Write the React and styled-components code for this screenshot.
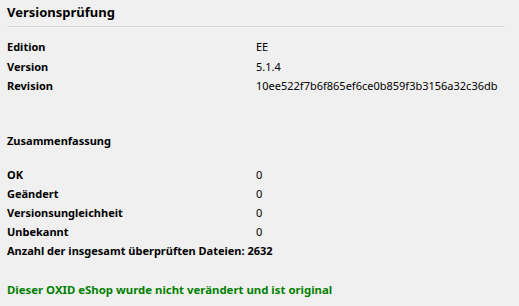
import React from "react";
import styled, { createGlobalStyle } from "styled-components";

const Global = createGlobalStyle`
  html, body { margin: 0; padding: 0; background: #f0f0f0; }
  body { font-family: "Noto Sans", "DejaVu Sans", sans-serif; color: #000; }
`;

const Page = styled.div`
  padding: 4px 14px 0 7px;
  display: flex;
  flex-direction: column;
`;

const Title = styled.h1`
  margin: 0;
  font-size: 13px;
  font-weight: bold;
  line-height: 17px;
  padding-bottom: 5px;
  border-bottom: 1px solid #d8d8d8;
`;

const Table = styled.div`
  display: grid;
  grid-template-columns: 249px 1fr;
  grid-auto-rows: ${(p) => p.$row}px;
  align-items: center;
  font-size: 11px;
  margin-top: ${(p) => p.$mt}px;
`;

const Label = styled.div`
  font-weight: bold;
  white-space: nowrap;
`;

const Value = styled.div`
  white-space: nowrap;
`;

const Section = styled.div`
  font-size: 11px;
  font-weight: bold;
  margin-top: 38.5px;
  line-height: 14px;
`;

const Summary = styled.div`
  font-size: 11px;
  font-weight: bold;
  white-space: nowrap;
  line-height: 19px;
`;

const Ok = styled.div`
  color: #008000;
  font-size: 11.4px;
  font-weight: bold;
  margin-top: 23.5px;
  line-height: 14px;
  white-space: nowrap;
`;

const info = [
  ["Edition", "EE"],
  ["Version", "5.1.4"],
  ["Revision", "10ee522f7b6f865ef6ce0b859f3b3156a32c36db"],
];

const summary = [
  ["OK", "0"],
  ["Geändert", "0"],
  ["Versionsungleichheit", "0"],
  ["Unbekannt", "0"],
];

export default function App() {
  return (
    <>
      <Global />
      <Page>
        <Title>Versionsprüfung</Title>
        <Table $mt={10} $row={19.5}>
          {info.map(([l, v]) => (
            <React.Fragment key={l}>
              <Label>{l}</Label>
              <Value>{v}</Value>
            </React.Fragment>
          ))}
        </Table>
        <Section>Zusammenfassung</Section>
        <Table $mt={16.5} $row={19}>
          {summary.map(([l, v]) => (
            <React.Fragment key={l}>
              <Label>{l}</Label>
              <Value>{v}</Value>
            </React.Fragment>
          ))}
        </Table>
        <Summary>Anzahl der insgesamt überprüften Dateien: 2632</Summary>
        <Ok>Dieser OXID eShop wurde nicht verändert und ist original</Ok>
      </Page>
    </>
  );
}
